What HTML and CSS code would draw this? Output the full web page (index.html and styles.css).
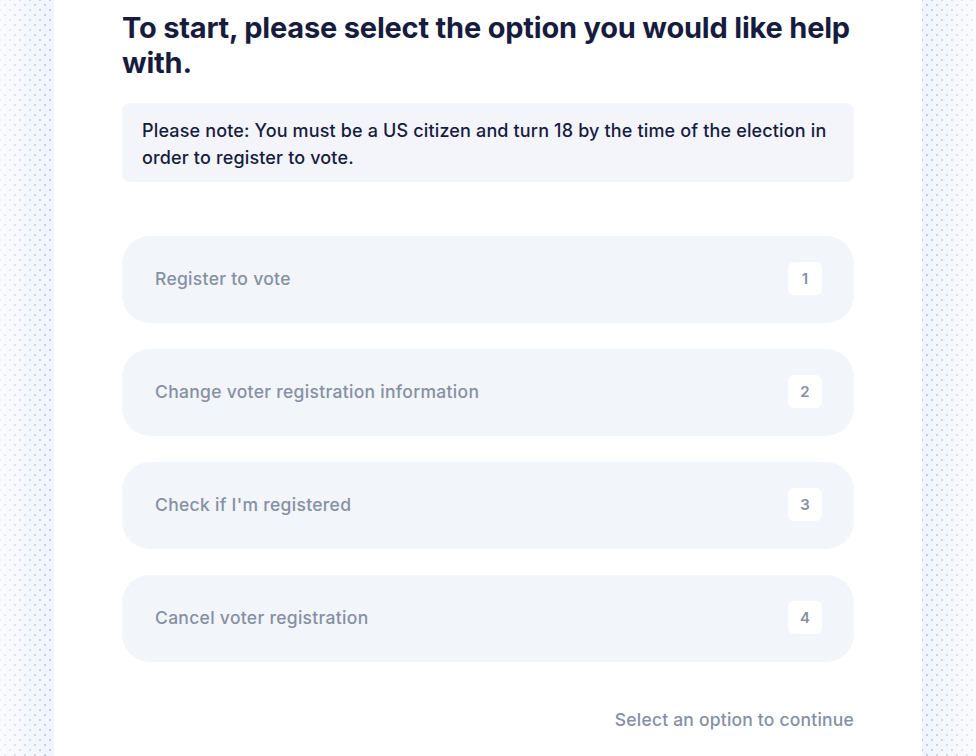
FILE: index.html
```html
<!DOCTYPE html>
<html lang="en">
<head>
    <meta charset="UTF-8">
    <meta name="viewport" content="width=device-width, initial-scale=1.0">
    <title>Voter registration</title>
    <link rel="stylesheet" href="styles.css">
</head>
<body>
    <div class="page">
        <aside class="side side-left"></aside>
        <main class="main">
            <h1 class="title">To start, please select the option you would like help with.</h1>
            <div class="note">Please note: You must be a US citizen and turn 18 by the time of the election in order to register to vote.</div>
            <ul class="options">
                <li class="option"><span>Register to vote</span><span class="key">1</span></li>
                <li class="option"><span>Change voter registration information</span><span class="key">2</span></li>
                <li class="option"><span>Check if I'm registered</span><span class="key">3</span></li>
                <li class="option"><span>Cancel voter registration</span><span class="key">4</span></li>
            </ul>
            <div class="foot">Select an option to continue</div>
        </main>
        <aside class="side side-right"></aside>
    </div>
</body>
</html>
```
FILE: styles.css
```css
html{
    height: 100%;
}
body{
    margin: 0;
    height: 100%;
    overflow: hidden;
    font-family: Inter, "Noto Sans", sans-serif;
    background: #fff;
}
.page{
    display: flex;
    height: 100%;
}
.side{
    width: 54px;
    flex: none;
    background-color: #f0f4fd;
    background-image:
        radial-gradient(circle, #b3bbc8 0.6px, transparent 1px),
        radial-gradient(circle, #b3bbc8 0.6px, transparent 1px);
    background-size: 10px 10px, 10px 10px;
    background-position: 0 0, 5px 5px;
}
.side-left{
    -webkit-mask-image: linear-gradient(to right, rgba(0,0,0,.35), #000);
}
.side-right{
    -webkit-mask-image: linear-gradient(to left, rgba(0,0,0,.35), #000);
}
.main{
    flex: 1;
    padding: 10px 68px 0;
}
.title{
    margin: 0;
    font-size: 29px;
    line-height: 35px;
    font-weight: 700;
    color: #171c3f;
    letter-spacing: -0.2px;
}
.note{
    margin-top: 23px;
    background: #f3f5fa;
    border-radius: 8px;
    padding: 14px 20px 11px;
    font-size: 18px;
    line-height: 27px;
    font-weight: 500;
    color: #171c3f;
    letter-spacing: 0.15px;
}
.options{
    list-style: none;
    margin: 54px 0 0;
    padding: 0;
    display: flex;
    flex-direction: column;
    gap: 26px;
}
.option{
    height: 87px;
    box-sizing: border-box;
    border-radius: 28px;
    background: #f2f5fa;
    display: flex;
    align-items: center;
    justify-content: space-between;
    padding: 0 32px 3px 33px;
    font-size: 17.5px;
    font-weight: 500;
    letter-spacing: 0.3px;
    color: #8690a3;
}
.key{
    width: 34px;
    height: 33px;
    margin-top: 1px;
    background: #fff;
    border-radius: 6px;
    display: flex;
    align-items: center;
    justify-content: center;
    font-size: 15px;
    font-weight: 600;
    letter-spacing: 0;
}
.foot{
    margin-top: 47px;
    text-align: right;
    font-size: 17.5px;
    font-weight: 500;
    letter-spacing: 0.2px;
    color: #8690a3;
}
```
